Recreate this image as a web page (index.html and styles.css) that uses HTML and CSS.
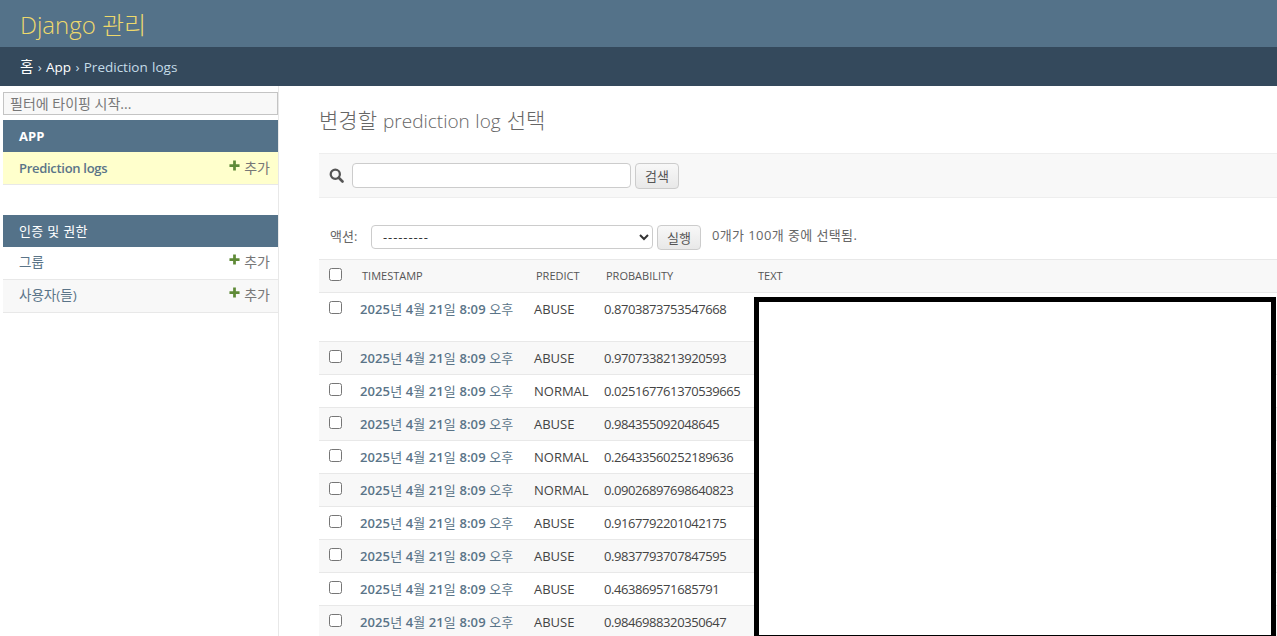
FILE: index.html
```html
<!DOCTYPE html>
<html lang="ko">
<head>
    <meta charset="UTF-8">
    <title>변경할 prediction log 선택</title>
    <link rel="stylesheet" href="styles.css">
</head>
<body>
    <header class="site-header">
        <div class="branding">Django 관리</div>
    </header>
    <nav class="breadcrumbs"><a class="home" href="#">홈</a> › <a href="#">App</a> › Prediction logs</nav>
    <div class="main">
        <aside class="sidebar">
            <input class="nav-filter" type="text" placeholder="필터에 타이핑 시작...">
            <div class="module">
                <div class="module-title app-title">APP</div>
                <div class="module-row current"><a class="model" href="#">Prediction logs</a><a class="add" href="#"><svg class="plus" viewBox="0 0 12 12"><path d="M4.5 0.5h3v4h4v3h-4v4h-3v-4h-4v-3h4z"/></svg>추가</a></div>
            </div>
            <div class="module">
                <div class="module-title">인증 및 권한</div>
                <div class="module-row"><a class="model" href="#">그룹</a><a class="add" href="#"><svg class="plus" viewBox="0 0 12 12"><path d="M4.5 0.5h3v4h4v3h-4v4h-3v-4h-4v-3h4z"/></svg>추가</a></div>
                <div class="module-row shaded"><a class="model" href="#">사용자(들)</a><a class="add" href="#"><svg class="plus" viewBox="0 0 12 12"><path d="M4.5 0.5h3v4h4v3h-4v4h-3v-4h-4v-3h4z"/></svg>추가</a></div>
            </div>
        </aside>
        <main class="content">
            <h1>변경할 <span class="latin">prediction log</span> 선택</h1>
            <div class="toolbar">
                <svg class="search-icon" viewBox="0 0 16 16"><circle cx="6.7" cy="6.7" r="4.9" fill="none" stroke="#555" stroke-width="2.4"/><path d="M10.4 10.4l4 4" stroke="#555" stroke-width="2.8" stroke-linecap="round"/></svg>
                <input class="search-box" type="text">
                <button class="btn" type="button">검색</button>
            </div>
            <div class="actions">
                <label class="action-label">액션:</label>
                <select class="action-select"><option>---------</option></select>
                <button class="btn" type="button">실행</button>
                <span class="counter">0개가 100개 중에 선택됨.</span>
            </div>
            <div class="results">
                <table>
                    <thead>
                        <tr><th class="check"><input type="checkbox"></th><th class="col-time">Timestamp</th><th class="col-predict">Predict</th><th class="col-prob">Probability</th><th>Text</th></tr>
                    </thead>
                    <tbody>
                        <tr class="first"><td class="check"><input type="checkbox"></td><td class="time"><a href="#"><b>2025</b>년 <b>4</b>월 <b>21</b>일 <b>8:09</b> 오후</a></td><td>ABUSE</td><td class="prob">0.8703873753547668</td><td></td></tr>
                        <tr class="alt"><td class="check"><input type="checkbox"></td><td class="time"><a href="#"><b>2025</b>년 <b>4</b>월 <b>21</b>일 <b>8:09</b> 오후</a></td><td>ABUSE</td><td class="prob">0.9707338213920593</td><td></td></tr>
                        <tr><td class="check"><input type="checkbox"></td><td class="time"><a href="#"><b>2025</b>년 <b>4</b>월 <b>21</b>일 <b>8:09</b> 오후</a></td><td>NORMAL</td><td class="prob">0.025167761370539665</td><td></td></tr>
                        <tr class="alt"><td class="check"><input type="checkbox"></td><td class="time"><a href="#"><b>2025</b>년 <b>4</b>월 <b>21</b>일 <b>8:09</b> 오후</a></td><td>ABUSE</td><td class="prob">0.984355092048645</td><td></td></tr>
                        <tr><td class="check"><input type="checkbox"></td><td class="time"><a href="#"><b>2025</b>년 <b>4</b>월 <b>21</b>일 <b>8:09</b> 오후</a></td><td>NORMAL</td><td class="prob">0.26433560252189636</td><td></td></tr>
                        <tr class="alt"><td class="check"><input type="checkbox"></td><td class="time"><a href="#"><b>2025</b>년 <b>4</b>월 <b>21</b>일 <b>8:09</b> 오후</a></td><td>NORMAL</td><td class="prob">0.09026897698640823</td><td></td></tr>
                        <tr><td class="check"><input type="checkbox"></td><td class="time"><a href="#"><b>2025</b>년 <b>4</b>월 <b>21</b>일 <b>8:09</b> 오후</a></td><td>ABUSE</td><td class="prob">0.9167792201042175</td><td></td></tr>
                        <tr class="alt"><td class="check"><input type="checkbox"></td><td class="time"><a href="#"><b>2025</b>년 <b>4</b>월 <b>21</b>일 <b>8:09</b> 오후</a></td><td>ABUSE</td><td class="prob">0.9837793707847595</td><td></td></tr>
                        <tr><td class="check"><input type="checkbox"></td><td class="time"><a href="#"><b>2025</b>년 <b>4</b>월 <b>21</b>일 <b>8:09</b> 오후</a></td><td>ABUSE</td><td class="prob">0.463869571685791</td><td></td></tr>
                        <tr class="alt"><td class="check"><input type="checkbox"></td><td class="time"><a href="#"><b>2025</b>년 <b>4</b>월 <b>21</b>일 <b>8:09</b> 오후</a></td><td>ABUSE</td><td class="prob">0.9846988320350647</td><td></td></tr>
                    </tbody>
                </table>
                <div class="redaction"></div>
            </div>
        </main>
    </div>
</body>
</html>
```
FILE: styles.css
```css
* {
    box-sizing: border-box;
}
html, body {
    height: 636px;
    overflow: hidden;
}
body {
    margin: 0;
    font-family: "Open Sans", "Noto Sans CJK KR", sans-serif;
    font-size: 13px;
    color: #444;
    background: #fff;
}
a {
    text-decoration: none;
}
.site-header {
    height: 47px;
    padding: 0 20px;
    background: #547289;
    display: flex;
    align-items: center;
}
.branding {
    font-size: 24px;
    font-weight: 300;
    color: #eed96c;
}
.breadcrumbs {
    height: 39px;
    padding: 0 20px;
    line-height: 39px;
    font-size: 13.5px;
    word-spacing: 0.8px;
    background: #34495c;
    color: #c4dce8;
}
.breadcrumbs a {
    color: #fff;
}
.breadcrumbs .home {
    font-size: 14.5px;
}
.main {
    display: flex;
}
.sidebar {
    width: 276px;
    height: 550px;
    margin-left: 3px;
    margin-right: 40px;
    padding-top: 6px;
    border-right: 1px solid #e8e8e8;
    flex: none;
}
.nav-filter {
    display: block;
    width: 275px;
    height: 23px;
    margin-bottom: 5px;
    padding: 0 6px;
    border: 1px solid #c4c4c4;
    background: #f8f8f8;
    font: 14px "Open Sans", "Noto Sans CJK KR", sans-serif;
}
.nav-filter::placeholder {
    color: #777;
}
.module {
    margin-bottom: 30px;
}
.module-title {
    height: 32px;
    line-height: 32px;
    padding-left: 16px;
    background: #547289;
    color: #fff;
    font-size: 13px;
    letter-spacing: 0.3px;
}
.app-title {
    font-weight: 700;
    letter-spacing: 0;
}
.module-row {
    height: 33px;
    display: flex;
    align-items: center;
    justify-content: space-between;
    padding: 0 8px 4px 16px;
    border-bottom: 1px solid #e8e8e8;
}
.module-row.current {
    padding-bottom: 1px;
    background: #ffffcc;
}
.module-row.shaded {
    background: #f8f8f8;
}
.model {
    color: #5a7488;
    font-size: 13.5px;
}
.current .model {
    font-size: 13px;
    font-weight: 600;
    letter-spacing: -0.3px;
}
.add {
    color: #777;
    display: flex;
    align-items: center;
    font-size: 14px;
}
.current .add {
    margin-top: -2px;
}
.plus {
    width: 11px;
    height: 11px;
    margin-right: 4px;
    margin-top: -3px;
    fill: #5f8a37;
}
.content {
    flex: 1;
    min-width: 0;
}
h1 {
    margin: 20px 0 19px;
    height: 28px;
    line-height: 28px;
    font-size: 21px;
    font-weight: 300;
    word-spacing: 0.6px;
    color: #666;
}
h1 .latin {
    font-size: 19px;
}
.toolbar {
    height: 45px;
    display: flex;
    align-items: center;
    padding-left: 10px;
    background: #f8f8f8;
    border-top: 1px solid #eee;
    border-bottom: 1px solid #eee;
}
.search-icon {
    width: 15px;
    height: 15px;
    margin-right: 8px;
}
.search-box {
    width: 279px;
    height: 25px;
    margin-right: 4px;
    border: 1px solid #ccc;
    border-radius: 4px;
    background: #fff;
}
.btn {
    height: 26px;
    padding: 0 9px;
    border: 1px solid #ccc;
    border-radius: 4px;
    background: linear-gradient(#f8f8f8, #e8e8e8);
    color: #555;
    font: 13px "Open Sans", "Noto Sans CJK KR", sans-serif;
}
.actions {
    height: 61px;
    padding: 27px 0 0 11px;
    display: flex;
    align-items: flex-start;
}
.action-label {
    width: 41px;
    line-height: 22px;
    color: #666;
}
.action-select {
    width: 282px;
    height: 24px;
    margin-right: 4px;
    padding-left: 7px;
    border: 1px solid #ccc;
    border-radius: 4px;
    background: #fff;
    color: #333;
    letter-spacing: 0.9px;
    font: 13px "Open Sans", "Noto Sans CJK KR", sans-serif;
}
.actions .btn {
    height: 25px;
}
.counter {
    margin-left: 11px;
    line-height: 20px;
    letter-spacing: 0.4px;
    color: #666;
}
.results {
    position: relative;
}
table {
    width: 100%;
    border-collapse: collapse;
    table-layout: fixed;
}
th {
    height: 33px;
    padding: 0 0 2px 8px;
    text-align: left;
    font-size: 11px;
    font-weight: 400;
    text-transform: uppercase;
    color: #555;
    background: #f8f8f8;
    border-top: 1px solid #e8e8e8;
    border-bottom: 1px solid #e8e8e8;
}
td {
    height: 33px;
    padding: 0 0 0 6px;
    font-size: 13px;
    white-space: nowrap;
    border-bottom: 1px solid #e8e8e8;
}
tr.first td {
    height: 49px;
    vertical-align: top;
    padding-top: 7px;
}
tr.alt td {
    background: #f8f8f8;
}
td.check, th.check {
    width: 35px;
    padding: 0 0 4px 10px;
}
tr.first td.check {
    padding: 8px 0 0 10px;
}
.check input {
    display: block;
    width: 13px;
    height: 13px;
    margin: 0;
}
.col-time {
    width: 174px;
}
.col-predict {
    width: 70px;
}
.col-prob {
    width: 152px;
}
td.time {
    padding-bottom: 2px;
}
tr.first td.time {
    padding-top: 6px;
    padding-bottom: 0;
}
.time a {
    color: #5a7488;
    letter-spacing: 0.1px;
}
.time b {
    font-weight: 600;
}
.prob {
    letter-spacing: -0.42px;
}
.redaction {
    position: absolute;
    left: 435px;
    top: 38px;
    width: 522px;
    height: 343px;
    border: 5px solid #000;
    background: #fff;
}
```
